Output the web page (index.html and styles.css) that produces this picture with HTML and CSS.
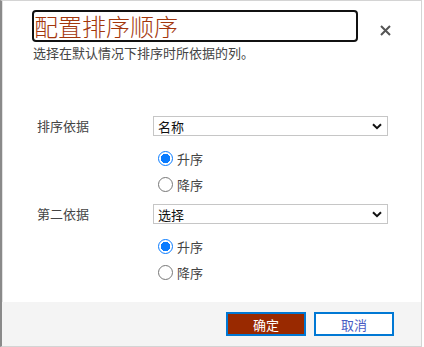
FILE: index.html
```html
<!DOCTYPE html>
<html>
	<head>
		<meta charset="UTF-8">
		<title>配置排序顺序</title>
		<link rel="stylesheet" href="styles.css">
	</head>
	<body>
		<div class="dialog">
			<div class="head">
				<div class="head-text">
					<h1 class="title" tabindex="0">配置排序顺序</h1>
					<p class="sub">选择在默认情况下排序时所依据的列。</p>
				</div>
				<button class="close" aria-label="关闭">
					<svg width="11" height="11" viewBox="0 0 11 11"><path d="M1 1L10 10M10 1L1 10" stroke="#555" stroke-width="2" fill="none"/></svg>
				</button>
			</div>
			<div class="form">
				<div class="group">
					<label class="lbl">排序依据</label>
					<div class="sel">
						<select><option>名称</option></select>
						<svg class="chev" width="10" height="7" viewBox="0 0 10 7"><path d="M1 1.2L5 5.2L9 1.2" stroke="#111" stroke-width="2" fill="none"/></svg>
					</div>
					<div class="radios">
						<label class="radio"><input type="radio" name="o1" checked><span>升序</span></label>
						<label class="radio"><input type="radio" name="o1"><span>降序</span></label>
					</div>
				</div>
				<div class="group">
					<label class="lbl">第二依据</label>
					<div class="sel">
						<select><option>选择</option></select>
						<svg class="chev" width="10" height="7" viewBox="0 0 10 7"><path d="M1 1.2L5 5.2L9 1.2" stroke="#111" stroke-width="2" fill="none"/></svg>
					</div>
					<div class="radios">
						<label class="radio"><input type="radio" name="o2" checked><span>升序</span></label>
						<label class="radio"><input type="radio" name="o2"><span>降序</span></label>
					</div>
				</div>
			</div>
			<div class="foot">
				<button class="btn ok">确定</button>
				<button class="btn cancel">取消</button>
			</div>
		</div>
	</body>
</html>
```

FILE: styles.css
```css
html,body{
	margin:0;
	padding:0;
	background:#fff;
}
body{
	font-family:"Noto Sans CJK SC","Liberation Sans",sans-serif;
	font-size:13px;
	color:#444;
}
.dialog{
	box-sizing:border-box;
	width:422px;
	height:347px;
	border-left:2px solid #8a8a8a;
	border-top:1px solid #d4d4d4;
	border-right:1px solid #d4d4d4;
	border-bottom:1px solid #d4d4d4;
	box-shadow:inset 1px 0 0 #e2e2e2;
	display:flex;
	flex-direction:column;
}
.head{
	display:flex;
	align-items:flex-start;
	padding:9px 0 0 30px;
}
.head-text{
	width:326px;
}
.title{
	box-sizing:border-box;
	margin:0;
	height:32px;
	border:2px solid #111;
	border-radius:4px;
	padding:0;
	font-size:24px;
	font-weight:300;
	line-height:27px;
	color:#a3360c;
	outline:none;
}
.sub{
	margin:2px 0 0 1px;
	font-size:13px;
	line-height:18px;
	color:#444;
}
.close{
	margin:14px 0 0 21px;
	padding:0;
	border:0;
	background:none;
	width:12px;
	height:12px;
	display:flex;
	align-items:center;
	justify-content:center;
}
.form{
	flex:1;
	padding:54px 0 0 35px;
}
.group{
	display:grid;
	grid-template-columns:116px 235px;
	margin-bottom:7px;
}
.lbl{
	line-height:20px;
	color:#444;
}
.sel{
	position:relative;
	height:20px;
}
.sel select{
	box-sizing:border-box;
	width:235px;
	height:20px;
	margin:0;
	padding:0 0 0 4px;
	border:1px solid #c6c6c6;
	border-radius:0;
	background:#fff;
	appearance:none;
	-webkit-appearance:none;
	font-family:inherit;
	font-size:13px;
	color:#111;
}
.chev{
	position:absolute;
	right:6px;
	top:7px;
}
.radios{
	grid-column:2;
	padding:9px 0 0 5px;
}
.radio{
	display:flex;
	align-items:center;
	height:26px;
	color:#444;
}
.radio input{
	appearance:none;
	-webkit-appearance:none;
	box-sizing:border-box;
	width:15px;
	height:15px;
	margin:0 4px 0 0;
	border:1px solid #777;
	border-radius:50%;
	background:#fff;
}
.radio input:checked{
	border:1.5px solid #0a7cff;
	background:radial-gradient(circle,#0a7cff 0 4.5px,#fff 5px);
}
.foot{
	height:44px;
	background:#f4f4f4;
	display:flex;
	justify-content:flex-end;
	align-items:flex-start;
	gap:8px;
	padding:10px 27px 0 0;
	box-sizing:border-box;
}
.btn{
	box-sizing:border-box;
	width:80px;
	height:24px;
	margin:0;
	padding:0;
	font-family:inherit;
	font-size:13px;
	border:2px solid #0078d4;
}
.ok{
	background:#992900;
	color:#fff;
}
.cancel{
	background:#fff;
	color:#4a5bc4;
}
```
